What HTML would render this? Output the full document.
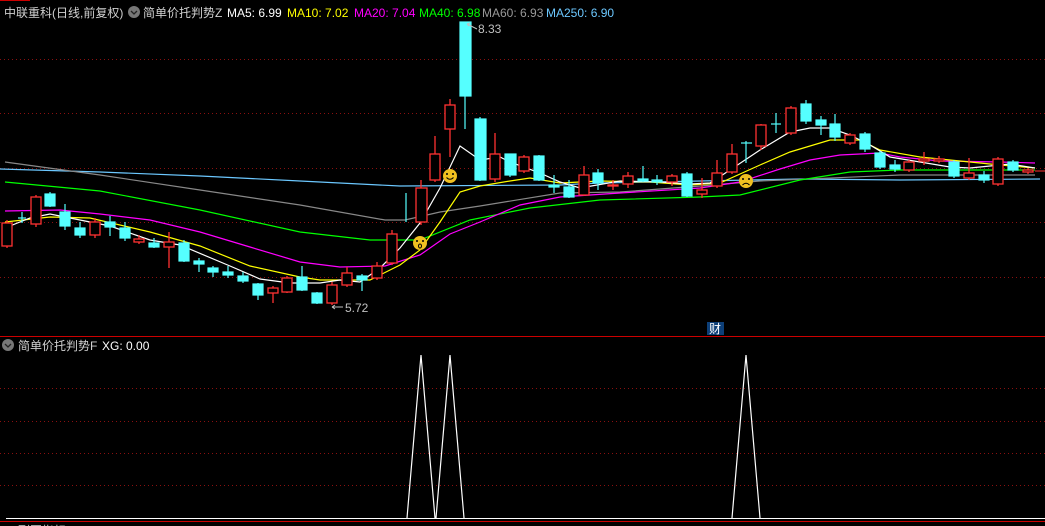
<!DOCTYPE html>
<html><head><meta charset="utf-8"><style>
html,body{margin:0;padding:0;background:#000;width:1045px;height:526px;overflow:hidden}
svg{display:block}
text{font-family:"Liberation Sans","Noto Sans CJK SC",sans-serif;font-size:12px}
</style></head><body>
<svg width="1045" height="526" viewBox="0 0 1045 526" xmlns="http://www.w3.org/2000/svg">
<rect width="1045" height="526" fill="#000"/>
<line x1="0" y1="0.5" x2="30" y2="0.5" stroke="#c00" stroke-width="1"/>
<g stroke="#8a1010" stroke-width="1" stroke-dasharray="1,3">
<line x1="0" y1="59.5" x2="1045" y2="59.5"/><line x1="0" y1="113.5" x2="1045" y2="113.5"/>
<line x1="0" y1="168.5" x2="1045" y2="168.5"/><line x1="0" y1="222.5" x2="1045" y2="222.5"/>
<line x1="0" y1="277.5" x2="1045" y2="277.5"/>
<line x1="0" y1="388.5" x2="1045" y2="388.5"/><line x1="0" y1="421.5" x2="1045" y2="421.5"/>
<line x1="0" y1="453.5" x2="1045" y2="453.5"/><line x1="0" y1="485.5" x2="1045" y2="485.5"/>
</g>
<line x1="0" y1="336.5" x2="1045" y2="336.5" stroke="#c00"/>
<line x1="0" y1="521.5" x2="1045" y2="521.5" stroke="#c00"/>
<g fill="none" stroke-width="1.2">
<polyline stroke="#6cc8ff" points="0,169 100,172 200,176 300,181 400,186 560,185 600,183 700,181 800,179 900,180 1040,179"/>
<polyline stroke="#888" points="5,162 100,175 200,190 300,205 385,220 405,220 440,212 480,206 560,193 620,192 700,186 760,181 900,175 1035,175"/>
<polyline stroke="#0f0" points="5,182 100,191 200,210 300,232 370,240 420,240 470,220 530,208 600,200 700,197 740,195 800,180 850,172 900,170 1035,170"/>
<polyline stroke="#f0f" points="5,211 60,210 100,214 150,220 200,232 250,247 300,262 340,267 385,266 420,255 450,234 480,222 520,205 560,197 620,193 700,188 740,182 780,169 810,160 840,155 880,153 900,157 940,161 1000,162 1035,163"/>
<polyline stroke="#ff0" points="5,222 50,217 90,218 150,232 200,246 250,266 300,277 320,280 370,280 400,265 420,250 440,222 460,192 480,186 510,181 530,178 560,183 600,181 650,182 690,185 720,183 760,165 790,152 830,140 860,140 880,150 920,157 960,161 1000,165 1035,168"/>
<polyline stroke="#fff" points="5,228 30,218 50,214 70,218 110,226 150,240 180,245 230,266 260,279 290,283 320,283 340,280 360,282 380,268 400,248 420,223 440,188 460,146 480,160 500,157 510,162 540,173 560,182 580,188 620,181 660,182 690,184 710,183 730,170 760,150 790,132 810,128 830,128 850,135 870,145 890,157 920,162 950,167 970,168 990,166 1010,164 1035,168"/>
</g>
<g stroke="#ff3232" fill="#000" stroke-width="1.3">
<line x1="7" y1="220" x2="7" y2="248"/><rect x="2" y="223" width="10" height="23"/>
<line x1="36" y1="195" x2="36" y2="227"/><rect x="31" y="197" width="10" height="27"/>
<line x1="95" y1="218" x2="95" y2="238"/><rect x="90" y="222" width="10" height="13"/>
<line x1="139" y1="235" x2="139" y2="244"/><rect x="134" y="239" width="10" height="3"/>
<line x1="169" y1="232" x2="169" y2="268"/><rect x="164" y="242" width="10" height="5"/>
<line x1="273" y1="286" x2="273" y2="303"/><rect x="268" y="288" width="10" height="5"/>
<line x1="287" y1="276" x2="287" y2="293"/><rect x="282" y="278" width="10" height="14"/>
<line x1="332" y1="282" x2="332" y2="305"/><rect x="327" y="285" width="10" height="18"/>
<line x1="347" y1="267" x2="347" y2="287"/><rect x="342" y="273" width="10" height="12"/>
<line x1="377" y1="262" x2="377" y2="280"/><rect x="372" y="266" width="10" height="12"/>
<line x1="392" y1="230" x2="392" y2="265"/><rect x="387" y="234" width="10" height="29"/>
<line x1="421" y1="180" x2="421" y2="225"/><rect x="416" y="188" width="11" height="34"/>
<line x1="435" y1="136" x2="435" y2="182"/><rect x="430" y="154" width="10" height="26"/>
<line x1="450" y1="99" x2="450" y2="157"/><rect x="445" y="105" width="10" height="24"/>
<line x1="495" y1="133" x2="495" y2="182"/><rect x="490" y="154" width="10" height="25"/>
<line x1="524" y1="155" x2="524" y2="173"/><rect x="519" y="157" width="10" height="14"/>
<line x1="584" y1="166" x2="584" y2="196"/><rect x="579" y="175" width="10" height="20"/>
<line x1="613" y1="180" x2="613" y2="190"/><rect x="608" y="185" width="10" height="1"/>
<line x1="628" y1="172" x2="628" y2="188"/><rect x="623" y="176" width="10" height="8"/>
<line x1="672" y1="174" x2="672" y2="186"/><rect x="667" y="176" width="10" height="6"/>
<line x1="702" y1="178" x2="702" y2="198"/><rect x="697" y="190" width="10" height="4"/>
<line x1="717" y1="160" x2="717" y2="188"/><rect x="712" y="173" width="10" height="13"/>
<line x1="732" y1="144" x2="732" y2="174"/><rect x="727" y="154" width="10" height="18"/>
<line x1="761" y1="124" x2="761" y2="150"/><rect x="756" y="125" width="10" height="21"/>
<line x1="791" y1="106" x2="791" y2="135"/><rect x="786" y="108" width="10" height="25"/>
<line x1="850" y1="133" x2="850" y2="145"/><rect x="845" y="135" width="10" height="8"/>
<line x1="909" y1="160" x2="909" y2="172"/><rect x="904" y="162" width="10" height="8"/>
<line x1="924" y1="152" x2="924" y2="165"/><rect x="919" y="159" width="10" height="2"/>
<line x1="939" y1="156" x2="939" y2="163"/><rect x="934" y="159" width="10" height="2"/>
<line x1="969" y1="158" x2="969" y2="180"/><rect x="964" y="173" width="10" height="5"/>
<line x1="998" y1="157" x2="998" y2="186"/><rect x="993" y="159" width="10" height="25"/>
<line x1="1028" y1="168" x2="1028" y2="174"/><rect x="1023" y="170" width="10" height="2"/>
</g>
<g stroke="#55ffff" fill="#55ffff" stroke-width="1.2">
<line x1="22" y1="212" x2="22" y2="223"/><line x1="18" y1="218" x2="26" y2="218"/>
<line x1="50" y1="192" x2="50" y2="207"/><rect x="45" y="194" width="10" height="12"/>
<line x1="65" y1="204" x2="65" y2="230"/><rect x="60" y="212" width="10" height="14"/>
<line x1="80" y1="222" x2="80" y2="238"/><rect x="75" y="228" width="10" height="7"/>
<line x1="110" y1="216" x2="110" y2="236"/><rect x="105" y="222" width="10" height="5"/>
<line x1="125" y1="222" x2="125" y2="241"/><rect x="120" y="228" width="10" height="10"/>
<line x1="154" y1="238" x2="154" y2="248"/><rect x="149" y="243" width="10" height="4"/>
<line x1="184" y1="240" x2="184" y2="262"/><rect x="179" y="243" width="10" height="18"/>
<line x1="199" y1="258" x2="199" y2="272"/><rect x="194" y="261" width="10" height="3"/>
<line x1="213" y1="266" x2="213" y2="277"/><rect x="208" y="268" width="10" height="4"/>
<line x1="228" y1="266" x2="228" y2="278"/><rect x="223" y="272" width="10" height="3"/>
<line x1="243" y1="272" x2="243" y2="283"/><rect x="238" y="276" width="10" height="5"/>
<line x1="258" y1="283" x2="258" y2="300"/><rect x="253" y="284" width="10" height="11"/>
<line x1="302" y1="266" x2="302" y2="291"/><rect x="297" y="277" width="10" height="13"/>
<line x1="317" y1="292" x2="317" y2="304"/><rect x="312" y="293" width="10" height="10"/>
<line x1="362" y1="274" x2="362" y2="291"/><rect x="357" y="276" width="10" height="4"/>
<line x1="406" y1="193" x2="406" y2="222"/>
<line x1="465" y1="22" x2="465" y2="129"/><rect x="460" y="22" width="11" height="74"/>
<line x1="480" y1="117" x2="480" y2="181"/><rect x="475" y="119" width="11" height="61"/>
<line x1="510" y1="154" x2="510" y2="177"/><rect x="505" y="154" width="11" height="21"/>
<line x1="539" y1="155" x2="539" y2="181"/><rect x="534" y="156" width="10" height="24"/>
<line x1="554" y1="175" x2="554" y2="193"/><rect x="549" y="185" width="10" height="2"/>
<line x1="569" y1="180" x2="569" y2="198"/><rect x="564" y="187" width="10" height="10"/>
<line x1="598" y1="169" x2="598" y2="190"/><rect x="593" y="173" width="10" height="10"/>
<line x1="643" y1="166" x2="643" y2="182"/><rect x="638" y="179" width="10" height="2"/>
<line x1="657" y1="175" x2="657" y2="185"/><rect x="652" y="180" width="10" height="2"/>
<line x1="687" y1="172" x2="687" y2="197"/><rect x="682" y="174" width="10" height="22"/>
<line x1="746" y1="141" x2="746" y2="163"/><line x1="741" y1="143" x2="752" y2="143"/>
<line x1="776" y1="113" x2="776" y2="133"/><line x1="771" y1="124" x2="781" y2="124"/>
<line x1="806" y1="100" x2="806" y2="124"/><rect x="801" y="104" width="10" height="17"/>
<line x1="821" y1="116" x2="821" y2="135"/><rect x="816" y="120" width="10" height="5"/>
<line x1="835" y1="114" x2="835" y2="141"/><rect x="830" y="124" width="10" height="13"/>
<line x1="865" y1="132" x2="865" y2="152"/><rect x="860" y="134" width="10" height="15"/>
<line x1="880" y1="151" x2="880" y2="169"/><rect x="875" y="153" width="10" height="14"/>
<line x1="895" y1="160" x2="895" y2="172"/><rect x="890" y="165" width="10" height="4"/>
<line x1="954" y1="160" x2="954" y2="178"/><rect x="949" y="162" width="10" height="14"/>
<line x1="984" y1="171" x2="984" y2="183"/><rect x="979" y="175" width="10" height="5"/>
<line x1="1013" y1="160" x2="1013" y2="172"/><rect x="1008" y="162" width="10" height="8"/>
</g>
<line x1="1035" y1="171" x2="1045" y2="171" stroke="#ff3232"/>
<g>
<circle cx="450" cy="176" r="7" fill="#f0c020"/><circle cx="447" cy="174" r="1" fill="#000"/><circle cx="453" cy="174" r="1" fill="#000"/><path d="M446.5,177.5 Q450,181 453.5,177.5" stroke="#000" fill="none"/>
<circle cx="420" cy="243" r="7" fill="#f0c020"/><circle cx="417" cy="241" r="1" fill="#000"/><circle cx="423" cy="241" r="1" fill="#000"/><ellipse cx="420" cy="246" rx="1.5" ry="2" fill="none" stroke="#000"/>
<circle cx="746" cy="181" r="7" fill="#f0c020"/><circle cx="743" cy="179" r="1" fill="#000"/><circle cx="749" cy="179" r="1" fill="#000"/><path d="M742.5,185 Q746,181.5 749.5,185" stroke="#000" fill="none"/>
</g>
<text x="478" y="33" fill="#c0c0c0">8.33</text><path d="M467,24 l3,-1 M467,24 l2,2 M467,24 L477,29" stroke="#c0c0c0" fill="none"/>
<text x="345" y="312" fill="#c0c0c0">5.72</text><path d="M332,307 L343,307 M332,307 l3,-2 M332,307 l3,2" stroke="#c0c0c0" fill="none"/>
<rect x="707" y="322" width="17" height="13" fill="#0d3f78"/>
<text x="709" y="333" fill="#fff" font-size="11">财</text>
<text x="4" y="17" fill="#d0d0d0" font-size="13">中联重科(日线,前复权)</text>
<circle cx="134" cy="12" r="6" fill="#777"/><path d="M131,11 l3,3 l3,-3" stroke="#222" fill="none" stroke-width="1.3"/>
<text x="143" y="17" fill="#d0d0d0" font-size="13">简单价托判势Z</text>
<text x="227" y="17" fill="#fff">MA5: 6.99</text>
<text x="287" y="17" fill="#ff0">MA10: 7.02</text>
<text x="354" y="17" fill="#f0f">MA20: 7.04</text>
<text x="419" y="17" fill="#0f0">MA40: 6.98</text>
<text x="482" y="17" fill="#999">MA60: 6.93</text>
<text x="546" y="17" fill="#6cc8ff">MA250: 6.90</text>
<circle cx="8" cy="345" r="6" fill="#777"/><path d="M5,344 l3,3 l3,-3" stroke="#222" fill="none" stroke-width="1.3"/>
<text x="18" y="350" fill="#d0d0d0" font-size="13">简单价托判势F</text>
<text x="102" y="350" fill="#fff">XG: 0.00</text>
<line x1="6" y1="518.5" x2="1045" y2="518.5" stroke="#fff"/>
<polyline fill="none" stroke="#fff" stroke-width="1.2" points="407,518 421,355 435,518 436,518 450,355 464,518"/>
<polyline fill="none" stroke="#fff" stroke-width="1.2" points="732,518 746,355 760,518"/>
<text x="18" y="535" fill="#ccc">副图指标 MA5: 6.99 MA10: 7.02 MA20: 7.04 MA40: 6.98</text>
</svg>
</body></html>
